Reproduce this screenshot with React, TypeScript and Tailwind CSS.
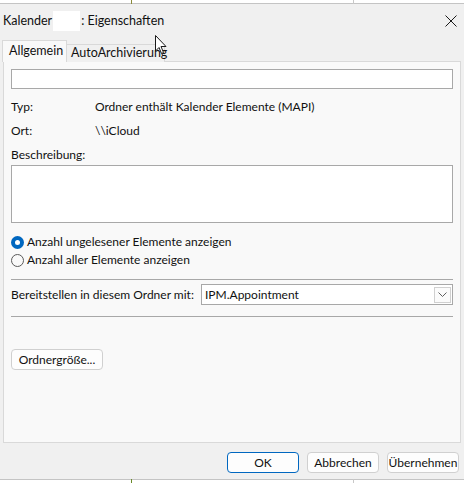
import React from "react"

const font = { fontFamily: 'Lato, "Segoe UI", sans-serif' }

function Radio({ checked, label }: { checked?: boolean; label: string }) {
  return (
    <div className="flex items-center h-[18px] gap-[3px]">
      {checked ? (
        <span className="w-[13px] h-[13px] rounded-full bg-[#0067c0] flex items-center justify-center">
          <span className="w-[5px] h-[5px] rounded-full bg-white" />
        </span>
      ) : (
        <span className="w-[13px] h-[13px] rounded-full border border-[#5a5a5a] bg-[#f9f9f9]" />
      )}
      <span>{label}</span>
    </div>
  )
}

function DlgButton({ label, primary }: { label: string; primary?: boolean }) {
  return (
    <button
      className={
        "h-[21px] w-[72px] rounded-[4px] bg-[#fdfdfd] text-[12px] text-[#111] leading-none whitespace-nowrap " +
        (primary ? "border border-[#0067c0]" : "border border-[#d0d0d0]")
      }
    >
      {label}
    </button>
  )
}

export default function App() {
  return (
    <div className="relative w-[464px] h-[483px] bg-white flex flex-col text-[12px] text-[#111] overflow-hidden" style={font}>
      {/* window edges behind the dialog */}
      <div className="absolute left-[131px] top-0 w-px h-[4px] bg-[#8a8a3a]" />
      <div className="absolute left-[353px] top-0 w-px h-[4px] bg-[#c8c8c8]" />
      <div className="absolute left-[131px] bottom-0 w-px h-[4px] bg-[#6a8a2a]" />
      <div className="absolute left-[353px] bottom-0 w-px h-[4px] bg-[#c8c8c8]" />

      <div className="h-[3px]" />
      <div className="flex-1 flex flex-col bg-[#f0f0f0] border-t border-b border-[#c4c4c4]">
        {/* title bar */}
        <div className="h-[34px] flex items-center pl-[3px] pr-[6px] text-[12.5px]">
          <span>Kalender</span>
          <span className="w-[27px] h-[20px] bg-white mx-[1px]" />
          <span>: Eigenschaften</span>
          <div className="flex-1" />
          <svg width="12" height="12" viewBox="0 0 12 12" className="mr-[1px]">
            <path d="M0.5 0.5 L11.5 11.5 M11.5 0.5 L0.5 11.5" stroke="#1a1a1a" strokeWidth="1" />
          </svg>
        </div>

        {/* tabs */}
        <div className="flex items-end ml-[2px] mt-[2px] h-[22px] relative z-10">
          <div className="h-[22px] w-[65px] px-[6px] flex items-center bg-[#f9f9f9] border border-b-0 border-[#d9d9d9] text-[12.5px]">
            Allgemein
          </div>
          <div className="h-[18px] w-[98px] px-[4px] flex items-center bg-[#f0f0f0] border border-l-0 border-b-0 border-[#d9d9d9] whitespace-nowrap text-[12.5px]">
            AutoArchivierung
          </div>
        </div>

        {/* panel */}
        <div className="mx-[3px] -mt-px h-[382px] border border-[#d9d9d9] bg-[#f9f9f9] pl-[7px] pr-[7px] flex flex-col">
          <div className="mt-[7px] h-[20px] bg-white border border-[#a8a8a8]" />

          <div className="mt-[6px] h-[24px] flex items-center">
            <span className="w-[84px]">Typ:</span>
            <span>Ordner enthält Kalender Elemente (MAPI)</span>
          </div>
          <div className="h-[24px] flex items-center">
            <span className="w-[84px]">Ort:</span>
            <span>\\iCloud</span>
          </div>
          <div className="mt-[4px] h-[16px] flex items-center">Beschreibung:</div>
          <div className="mt-[2px] h-[58px] bg-white border border-[#a8a8a8]" />

          <div className="mt-[10px] flex flex-col">
            <Radio checked label="Anzahl ungelesener Elemente anzeigen" />
            <Radio label="Anzahl aller Elemente anzeigen" />
          </div>

          <div className="mt-[10px] h-px bg-[#a8a8a8]" />
          <div className="mt-[4px] h-[21px] flex items-center">
            <span className="whitespace-nowrap">Bereitstellen in diesem Ordner mit:</span>
            <div className="ml-auto w-[252px] h-[21px] bg-white border border-[#a8a8a8] flex items-center pl-[3px] pr-[1px]">
              <span className="flex-1">IPM.Appointment</span>
              <span className="w-[17px] h-[16px] border border-[#d0d0d0] bg-[#fbfbfb] flex items-center justify-center">
                <svg width="9" height="5" viewBox="0 0 9 5">
                  <path d="M0.5 0.5 L4.5 4.5 L8.5 0.5" fill="none" stroke="#606060" strokeWidth="1" />
                </svg>
              </span>
            </div>
          </div>
          <div className="mt-[11px] h-px bg-[#a8a8a8]" />

          <div className="mt-[32px]">
            <button className="h-[21px] w-[92px] rounded-[4px] border border-[#d0d0d0] bg-[#fdfdfd] text-[12px] whitespace-nowrap">
              Ordnergröße...
            </button>
          </div>
        </div>

        {/* buttons */}
        <div className="flex justify-end gap-[8px] pt-[9px] pr-[5px]">
          <DlgButton label="OK" primary />
          <DlgButton label="Abbrechen" />
          <DlgButton label="Übernehmen" />
        </div>
      </div>
      <div className="h-[3px]" />

      {/* mouse pointer */}
      <svg className="absolute left-[155px] top-[35px] z-20" width="13" height="21" viewBox="0 0 13 21">
        <path d="M0.5 0.5 L0.5 16 L4 12.5 L6.5 18.5 L8.5 17.5 L6 11.5 L11 11.5 Z" fill="white" stroke="#1a1a1a" strokeWidth="1" strokeLinejoin="round" />
      </svg>
    </div>
  )
}
